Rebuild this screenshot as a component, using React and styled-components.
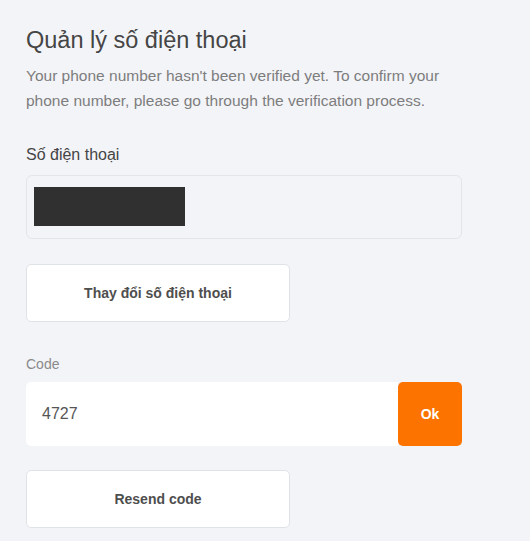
import React from "react";
import styled, { createGlobalStyle } from "styled-components";

const Global = createGlobalStyle`
  html, body { margin: 0; padding: 0; background: #f3f4f8; }
  body { font-family: "Liberation Sans", Arial, sans-serif; }
  * { box-sizing: border-box; }
`;

const Page = styled.div`
  padding: 25px 68px 0 26px;
  display: flex;
  flex-direction: column;
  width: 530px;
`;

const Title = styled.h1`
  margin: 0;
  font-size: 23.5px;
  font-weight: 400;
  color: #454545;
  line-height: 30px;
`;

const Intro = styled.p`
  margin: 8px 0 0;
  font-size: 15.5px;
  line-height: 25px;
  color: #7d7d7d;
`;

const Label = styled.div`
  margin-top: ${(p) => p.$mt}px;
  font-size: ${(p) => p.$size}px;
  color: ${(p) => p.$color};
  line-height: 20px;
`;

const PhoneBox = styled.div`
  margin-top: 10px;
  height: 64px;
  border: 1px solid #e3e5ea;
  border-radius: 6px;
  padding: 11px 7px;
  display: flex;
  align-items: flex-start;
`;

const Redacted = styled.div`
  width: 151px;
  height: 39px;
  background: #303030;
`;

const Button = styled.button`
  margin-top: ${(p) => p.$mt}px;
  width: 264px;
  height: 58px;
  background: #fff;
  border: 1px solid #dfe2e7;
  border-radius: 5px;
  font-family: inherit;
  font-size: 14px;
  font-weight: 700;
  color: #4e4e4e;
  cursor: pointer;
`;

const CodeRow = styled.div`
  margin-top: 8px;
  display: flex;
  height: 64px;
`;

const CodeInput = styled.div`
  flex: 1;
  background: #fff;
  border-radius: 5px 0 0 5px;
  display: flex;
  align-items: center;
  padding-left: 16px;
  font-size: 16px;
  color: #555;
`;

const OkButton = styled.button`
  width: 64px;
  background: #fc7300;
  border: none;
  border-radius: 5px;
  color: #fff;
  font-family: inherit;
  font-size: 14px;
  font-weight: 700;
`;

export default function App() {
  return (
    <>
      <Global />
      <Page>
        <Title>Quản lý số điện thoại</Title>
        <Intro>
          Your phone number hasn't been verified yet. To confirm your phone number, please go through the verification process.
        </Intro>
        <Label $mt={32} $size={16} $color="#454545">Số điện thoại</Label>
        <PhoneBox>
          <Redacted />
        </PhoneBox>
        <Button $mt={25}>Thay đổi số điện thoại</Button>
        <Label $mt={32} $size={14} $color="#8a8a8a">Code</Label>
        <CodeRow>
          <CodeInput>4727</CodeInput>
          <OkButton>Ok</OkButton>
        </CodeRow>
        <Button $mt={24}>Resend code</Button>
      </Page>
    </>
  );
}
